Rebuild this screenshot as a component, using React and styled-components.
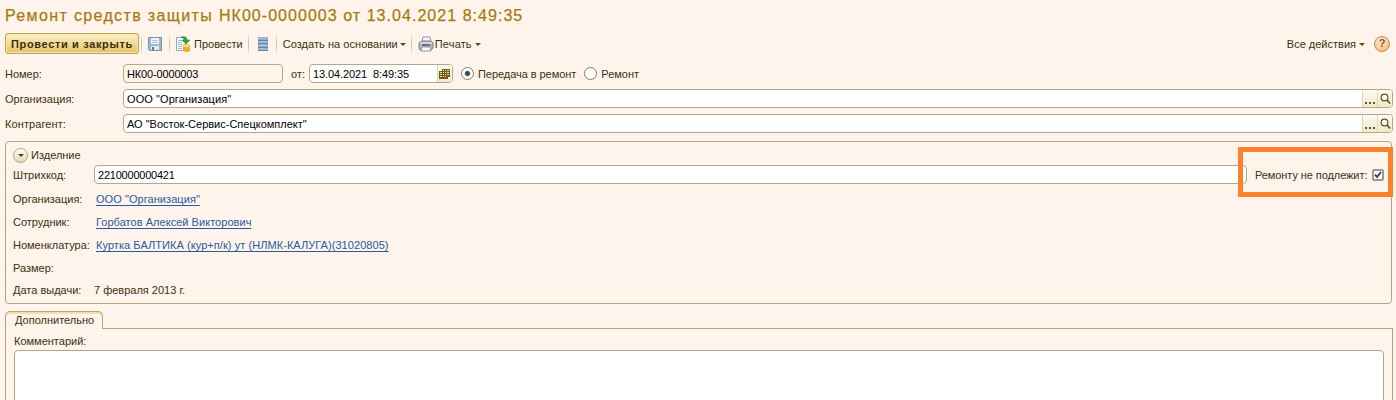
import React from 'react';
import styled, { createGlobalStyle } from 'styled-components';

const Global = createGlobalStyle`
  * { box-sizing: border-box; }
  html, body { margin: 0; background: #fef4ec; }
  body {
    height: 400px; overflow: hidden;
    font: 11px/14px "Liberation Sans", Arial, sans-serif;
    color: #40300e;
  }
  svg { display: block; flex: none; }
`;

const Page = styled.main`
  width: 1396px; height: 400px; padding: 5px 3px 0 5px; overflow: hidden;
  display: flex; flex-direction: column;
`;
const Title = styled.h1`
  margin: 0; height: 28px; flex: none; font-size: 16px; line-height: 21px; font-weight: 400;
  color: #a67c0e; white-space: pre;
  -webkit-text-stroke: 0.25px #a67c0e;
`;
const Text = styled.span`
  white-space: pre; letter-spacing: ${p => p.$ls || 0}px; flex: none;
  margin-left: ${p => p.$ml || 0}px;
`;
const Toolbar = styled.div`
  height: 22px; flex: none; display: flex; align-items: center; padding-bottom: 1px;
`;
const MainButton = styled.button`
  width: 134px; height: 21px; padding: 0; flex: none; border: 1px solid #c5a355; border-radius: 3px;
  background: linear-gradient(#fbefc9, #f0d996 55%, #e2bf6c);
  box-shadow: inset 0 0 0 1px #f6e6b4;
  font: bold 11px/14px "Liberation Sans", Arial, sans-serif; color: #3f2d08;
  letter-spacing: ${p => p.$ls || 0}px; white-space: nowrap;
`;
const Separator = styled.i`
  width: 1px; height: 20px; margin-left: ${p => p.$ml}px; flex: none;
  background: linear-gradient(#fef4ec, #cfc1a4 40%, #cfc1a4 60%, #fef4ec);
`;
const Glyph = styled.span`
  display: block; flex: none; margin-left: ${p => p.$ml || 0}px;
`;
const Arrow = styled.i`
  margin: ${p => p.$mt ?? 2}px 0 0 ${p => p.$ml ?? 3}px; border: solid transparent; border-width: 3px 3px 0;
  border-top-color: #5a471d; flex: none;
`;
const Spacer = styled.div`flex: 1;`;
const Help = styled.button`
  width: 16px; height: 16px; margin: 0 3px 0 9px; padding: 0; border: 1px solid #b98d62; border-radius: 50%;
  background: radial-gradient(circle at 45% 30%, #fff0df, #f9c58b 65%, #eda65e);
  font: bold 11px/13px "Liberation Sans", Arial, sans-serif; color: #7b5630;
`;
const Row = styled.div`
  display: flex; flex: none; align-items: center; height: 19px; margin-top: ${p => p.$mt || 0}px;
`;
const Label = styled.label`
  width: ${p => p.$w}px; flex: none; white-space: nowrap; letter-spacing: ${p => p.$ls || 0}px;
`;
const Field = styled.div`
  height: 19px; width: ${p => (p.$w ? `${p.$w}px` : 'auto')}; flex: ${p => (p.$w ? 'none' : 1)};
  margin-left: ${p => p.$ml || 0}px;
  display: flex; align-items: center; overflow: hidden; padding-left: 3px;
  border: 1px solid #b3a88c; border-radius: 4px; background: ${p => (p.$readonly ? '#fef4ec' : '#fff')};
  color: #000;
`;
const FieldButton = styled.button`
  width: 15px; height: 17px; padding: 0; flex: none; border: 0; border-left: 1px solid #ddd6bb;
  background: linear-gradient(#fdfbf0, #efe9cc);
  display: flex; align-items: center; justify-content: center;
`;
const Radio = styled.span`
  width: 13px; height: 13px; margin-left: ${p => p.$ml}px; border: 1px solid #837c6b; border-radius: 50%; flex: none;
  background: ${p => (p.$on ? 'radial-gradient(circle, #3f4a4c 2px, #fff 3.2px)' : '#fff')};
`;
const Group = styled.section`
  position: relative; width: 1387px; height: 163px; margin-top: 8px; flex: none;
  border: 1px solid #b3a685; border-radius: 4px; padding: 5px 0 0 7px;
`;
const GroupHead = styled.div`
  display: flex; align-items: center; height: 16px;
`;
const Toggle = styled.button`
  width: 15px; height: 15px; padding: 0; border: 1px solid #b3a685; border-radius: 50%;
  background: linear-gradient(#fffdf4, #e2d8b8); display: flex; align-items: center; justify-content: center;
`;
const InfoList = styled.div`
  padding-top: 3px;
`;
const InfoRow = styled.div`
  display: flex; align-items: center; height: ${p => p.$h || 23}px;
`;
const Link = styled.a`
  color: #2a5a9c; text-decoration: underline; text-underline-offset: 2px; text-decoration-skip-ink: none;
  white-space: pre; letter-spacing: ${p => p.$ls || 0}px; margin-left: 2px;
`;
const Highlight = styled.div`
  position: absolute; left: 1232px; top: 5px; width: 155px; height: 50px; border: 5px solid #fb812b;
`;
const Check = styled.span`
  width: 12px; height: 12px; margin-left: 5px; border: 1px solid #a39c89; border-radius: 2px;
  background: #fff; flex: none;
`;
const Tabs = styled.div`
  height: 18px; margin: 7px 0 -1px; display: flex; flex: none; z-index: 1;
`;
const Tab = styled.div`
  width: 98px; height: 18px; padding: 1px 0 0 9px; border: 1px solid #b3a685; border-bottom: 0;
  border-radius: 5px 5px 0 0; background: #fef4ec; box-shadow: inset 0 2px 0 #efe2a4; white-space: nowrap;
  letter-spacing: ${p => p.$ls || 0}px;
`;
const Panel = styled.section`
  width: 1388px; height: 90px; flex: none; border: 1px solid #b3a685; padding: 5px 8px 0;
`;
const Comment = styled.div`
  width: 1370px; height: 70px; margin-top: 2px; background: #fff; border: 1px solid #b3a685; border-radius: 4px;
`;

const SaveIcon = () => (
  <svg width="16" height="16" viewBox="0 0 16 16">
    <path d="M1.5 1.5h13v13h-12l-1-1z" fill="#9db8d6" stroke="#7690ad" />
    <path d="M4 2h8v6H4z" fill="#f1f6fa" />
    <path d="M5 4.5h6M5 6.5h6" stroke="#b6c4d0" />
    <path d="M4 10h8v4H4z" fill="#e6e9e6" />
    <path d="M5 11h2v3H5z" fill="#587594" />
  </svg>
);
const PostIcon = () => (
  <svg width="16" height="16" viewBox="0 0 16 16">
    <path d="M1.5 1.5h9v13h-9z" fill="#fafdff" stroke="#91a8bb" />
    <path d="M3 4.5h5M3 6.5h4M3 8.5h5M3 10.5h4M3 12.5h4" stroke="#a7bac9" />
    <path d="M6 1c4-1 6 0 6 3h3l-4 4-4-4h2C9 2.500 8 2 6 1z" fill="#35a043" stroke="#20792f" strokeWidth=".5" />
    <path d="M8 10v4c0 2.300 7 2.300 7 0v-4z" fill="#edbd35" />
    <ellipse cx="11.500" cy="10" rx="3.500" ry="1.500" fill="#ffe473" stroke="#d2a127" strokeWidth=".6" />
    <path d="M8 12c0 2 7 2 7 0M8 14c0 2 7 2 7 0" fill="none" stroke="#c89422" strokeWidth=".6" />
  </svg>
);
const ListIcon = () => (
  <svg width="10" height="14" viewBox="0 0 10 14">
    <path d="M0 0h10v14H0z" fill="#8eabd0" />
    <path d="M1 1.500h8M1 5h8M1 8.500h8M1 12h8" stroke="#a9c3df" strokeWidth="1.500" />
    <path d="M0 3.500h10M0 6.500h10M0 10.500h10M0 13.500h10" stroke="#66829f" />
  </svg>
);
const PrintIcon = () => (
  <svg width="16" height="16" viewBox="0 0 16 16">
    <path d="M4 6 5 1h7l1 5z" fill="#f8fafd" stroke="#9195a4" />
    <path d="m2 6 2-1h9l2 2v5l-2 2H2l-1-2V7z" fill="#b9bac2" stroke="#777985" />
    <path d="M2 7h12" stroke="#efeff4" />
    <path d="M4 8h8v2H4z" fill="#6b6e79" />
    <path d="M4 11h8l1 4H3z" fill="#f7faff" stroke="#8d96a9" />
    <path d="M12.500 9.500h1.500" stroke="#d88a38" />
  </svg>
);
const CalendarIcon = () => (
  <svg width="11" height="12" viewBox="0 0 11 12">
    <path d="M3 1h8v8H9v2H0V3h3z" fill="#6f5919" />
    <path d="M4 2h1v1H4zM6 2h1v1H6zM8 2h2v1H8zM1 4h2v1H1zM4 4h1v1H4zM6 4h1v1H6zM8 4h2v1H8zM1 6h2v1H1zM4 6h1v1H4zM6 6h1v1H6zM8 6h2v1H8zM1 8h2v1H1zM4 8h1v1H4zM6 8h1v1H6z" fill="#eee1a7" />
  </svg>
);
const SearchIcon = () => (
  <svg width="11" height="12" viewBox="0 0 11 12">
    <circle cx="4.500" cy="4.500" r="3.400" fill="#fffdf3" stroke="#655322" strokeWidth="1.200" />
    <path d="m7 7 3 3.500" stroke="#655322" strokeWidth="1.800" />
  </svg>
);
const DotsIcon = () => (
  <svg width="11" height="12" viewBox="0 0 11 12">
    <path d="M0 9h2v2H0zM4 9h2v2H4zM8 9h2v2H8z" fill="#655322" />
  </svg>
);
const CheckIcon = () => (
  <svg width="10" height="10" viewBox="0 0 10 10">
    <path d="M.5.5h9v9h-9z" fill="none" stroke="#333" strokeDasharray="1 1" />
    <path d="m2 4.500 2 2.500 4-5" fill="none" stroke="#33405f" strokeWidth="2" />
  </svg>
);

const LookupField = ({ children, $ls }) => (
  <Field>
    <Text $ls={$ls}>{children}</Text>
    <Spacer />
    <FieldButton><DotsIcon /></FieldButton>
    <FieldButton><SearchIcon /></FieldButton>
  </Field>
);

export default function App() {
  return (
    <Page>
      <Global />
      <Title>
        <Text $ls={1.36}>{'Ремонт средств защиты '}</Text>
        <Text $ls={1.04}>НК00-0000003 от 13.04.2021 8:49:35</Text>
      </Title>
      <Toolbar>
        <MainButton $ls={0.65}>Провести и закрыть</MainButton>
        <Separator $ml={2} />
        <Glyph $ml={5}><SaveIcon /></Glyph>
        <Separator $ml={6} />
        <Glyph $ml={5}><PostIcon /></Glyph>
        <Text $ml={3}>Провести</Text>
        <Separator $ml={5} />
        <Glyph $ml={9}><ListIcon /></Glyph>
        <Separator $ml={8} />
        <Text $ml={6} $ls={0.05}>Создать на основании</Text>
        <Arrow $ml={2} />
        <Separator $ml={5} />
        <Glyph $ml={6}><PrintIcon /></Glyph>
        <Text $ml={1} $ls={0.15}>Печать</Text>
        <Arrow />
        <Spacer />
        <Text>Все действия</Text>
        <Arrow />
        <Help>?</Help>
      </Toolbar>
      <Row $mt={9}>
        <Label $w={118}>Номер:</Label>
        <Field $w={160} $readonly><Text $ls={-0.15}>НК00-0000003</Text></Field>
        <Text $ml={8}>от:</Text>
        <Field $w={144} $ml={4}>
          <Text $ls={-0.1}>13.04.2021  8:49:35</Text>
          <Spacer />
          <FieldButton><CalendarIcon /></FieldButton>
        </Field>
        <Radio $ml={8} $on />
        <Text $ml={4} $ls={-0.05}>Передача в ремонт</Text>
        <Radio $ml={8} />
        <Text $ml={4}>Ремонт</Text>
      </Row>
      <Row $mt={6}>
        <Label $w={118}>Организация:</Label>
        <LookupField $ls={0.08}>ООО "Организация"</LookupField>
      </Row>
      <Row $mt={6}>
        <Label $w={118} $ls={0.1}>Контрагент:</Label>
        <LookupField>АО "Восток-Сервис-Спецкомплект"</LookupField>
      </Row>
      <Group>
        <GroupHead>
          <Toggle><Arrow $ml={0} $mt={0} /></Toggle>
          <Text $ml={3}>Изделние</Text>
        </GroupHead>
        <Row $mt={2}>
          <Label $w={81}>Штрихкод:</Label>
          <Field $w={1153}><Text $ls={-0.22}>2210000000421</Text></Field>
          <Text $ml={8} $ls={-0.08}>Ремонту не подлежит:</Text>
          <Check><CheckIcon /></Check>
        </Row>
        <InfoList>
          <InfoRow><Label $w={81}>Организация:</Label><Link $ls={0.06}>ООО "Организация"</Link></InfoRow>
          <InfoRow><Label $w={81}>Сотрудник:</Label><Link $ls={0.04}>Горбатов Алексей Викторович</Link></InfoRow>
          <InfoRow><Label $w={81}>Номенклатура:</Label><Link $ls={0.06}>Куртка БАЛТИКА (кур+п/к) ут (НЛМК-КАЛУГА)(31020805)</Link></InfoRow>
          <InfoRow><Label $w={81}>Размер:</Label></InfoRow>
          <InfoRow $h={21}><Label $w={81}>Дата выдачи:</Label><Text>7 февраля 2013 г.</Text></InfoRow>
        </InfoList>
        <Highlight />
      </Group>
      <Tabs><Tab>Дополнительно</Tab></Tabs>
      <Panel>
        <Text>Комментарий:</Text>
        <Comment />
      </Panel>
    </Page>
  );
}
